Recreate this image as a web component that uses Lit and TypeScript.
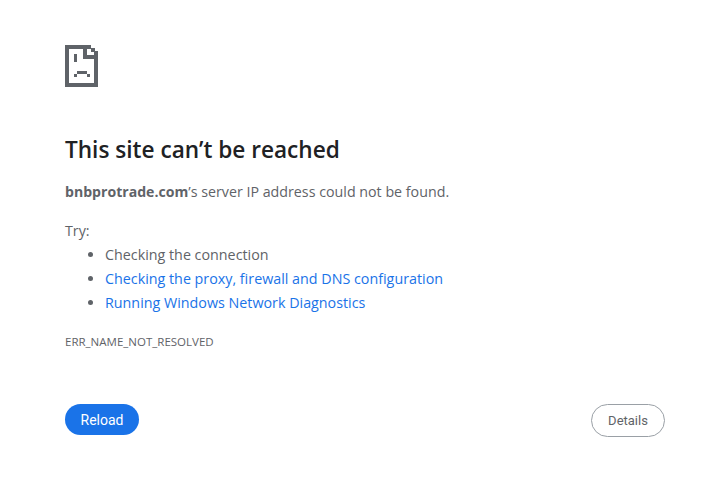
import { LitElement, html, css } from "lit";
import { customElement } from "lit/decorators.js";

@customElement("app-root")
export class AppRoot extends LitElement {
  static styles = css`
    :host { display: block; height: 487px; background: #fff; font-family: "Open Sans", "Noto Sans", sans-serif; color: #5f6368; overflow: hidden; }
    .page { display: flex; flex-direction: column; height: 487px; box-sizing: border-box; padding: 45px 57px 50px 65px; }
    .icon { display: block; width: 33px; height: 42px; }
    h1 { margin: 48px 0 0; font-size: 22.6px; line-height: 30px; font-weight: 600; color: #202124; }
    p { margin: 0; font-size: 14.25px; line-height: 20px; }
    .msg { margin-top: 17px; }
    .msg b { font-weight: 700; font-size: 14.1px; }
    .try { margin-top: 19px; }
    ul { margin: 4px 0 0; padding: 0 0 0 40px; font-size: 14.3px; line-height: 20px; }
    li { margin-bottom: 4px; }
    a { color: #1a73e8; text-decoration: none; }
    .code { margin-top: 17px; font-size: 11.5px; line-height: 16px; }
    .buttons { margin-top: auto; display: flex; justify-content: space-between; align-items: flex-start; }
    button { border-radius: 17px; font-family: Roboto, sans-serif; box-sizing: border-box; padding: 0; }
    .reload { width: 74px; height: 31px; background: #1a73e8; border: none; color: #fff; font-weight: 400; font-size: 14px; }
    .details { width: 74px; height: 33px; background: #fff; border: 1px solid #9aa0a6; color: #5f6368; font-weight: 400; font-size: 13px; }
  `;
  render() {
    return html`<div class="page">
      <svg class="icon" viewBox="0 0 33 42" fill="#5f6368" shape-rendering="crispEdges">
        <path d="M0 0h26v4H4v34h25V14h4v28H0z" />
        <path d="M18 4h4v6h11v4H18z" />
        <path d="M26 3h4v4h-4zM29 6h4v4h-4z" />
        <path d="M9 9h3v8H9zM12 26h10v3H12zM9 29h3v3H9zM22 29h3v3h-3z" />
      </svg>
      <h1>This site can’t be reached</h1>
      <p class="msg"><b>bnbprotrade.com</b>’s server IP address could not be found.</p>
      <p class="try">Try:</p>
      <ul>
        <li>Checking the connection</li>
        <li><a>Checking the proxy, firewall and DNS configuration</a></li>
        <li><a>Running Windows Network Diagnostics</a></li>
      </ul>
      <div class="code">ERR_NAME_NOT_RESOLVED</div>
      <div class="buttons">
        <button class="reload">Reload</button>
        <button class="details">Details</button>
      </div>
    </div>`;
  }
}
